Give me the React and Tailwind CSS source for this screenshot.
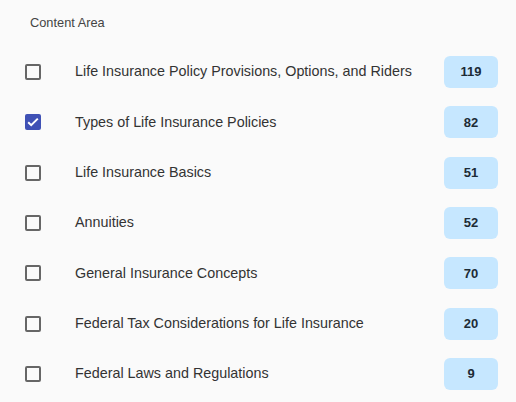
import React from 'react';

const areas = [
  { label: 'Life Insurance Policy Provisions, Options, and Riders', count: 119, checked: false },
  { label: 'Types of Life Insurance Policies', count: 82, checked: true },
  { label: 'Life Insurance Basics', count: 51, checked: false },
  { label: 'Annuities', count: 52, checked: false },
  { label: 'General Insurance Concepts', count: 70, checked: false },
  { label: 'Federal Tax Considerations for Life Insurance', count: 20, checked: false },
  { label: 'Federal Laws and Regulations', count: 9, checked: false },
];

function Box({ checked }) {
  if (checked) {
    return (
      <div className="w-4 h-4 rounded-[2px] bg-[#3f51b5] flex items-center justify-center">
        <svg width="14" height="14" viewBox="0 0 14 14" fill="none">
          <path d="M2.2 7.2l3 3L11.8 3.6" stroke="white" strokeWidth="2" />
        </svg>
      </div>
    );
  }
  return <div className="w-4 h-4 rounded-[2px] border-2 border-[#666]" />;
}

export default function App() {
  return (
    <div className="w-[516px] h-[402px] bg-[#fafafa] overflow-hidden" style={{ fontFamily: '"Liberation Sans", Arial, sans-serif' }}>
      <div className="h-[47px] pl-[30px] pt-[13px] text-[12.8px] text-[#444]">Content Area</div>
      {areas.map((a) => (
        <div key={a.label} className="h-[50.33px] flex items-center pl-[25px] pr-[18px]">
          <Box checked={a.checked} />
          <div className="ml-[34px] flex-1 text-[14.33px] text-[#333]">{a.label}</div>
          <div className="w-[54px] h-[32px] rounded-[6px] bg-[#c6e7ff] flex items-center justify-center text-[13px] font-bold text-[#1c2b36]">
            {a.count}
          </div>
        </div>
      ))}
    </div>
  );
}
